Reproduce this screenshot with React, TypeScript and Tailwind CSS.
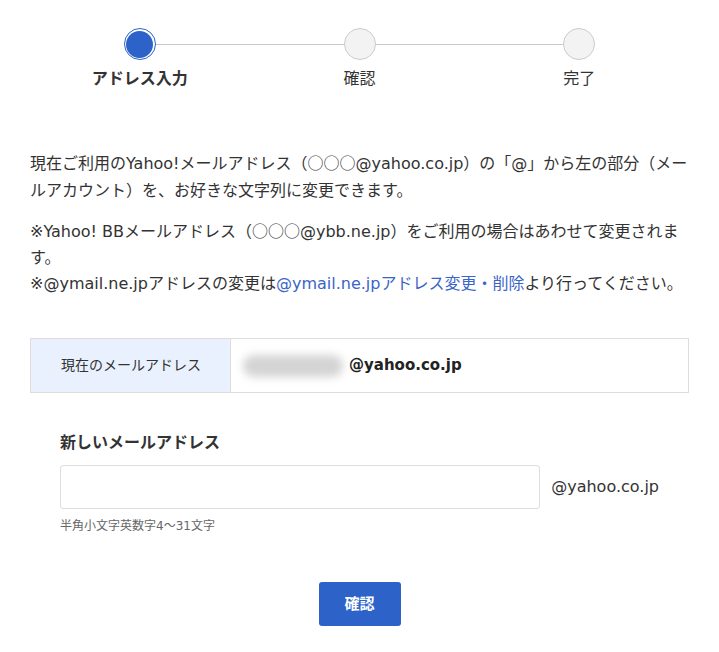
import React from 'react'

const font = { fontFamily: '"DejaVu Sans", "Noto Sans CJK JP", sans-serif' }
const cjk = { fontFamily: '"Noto Sans CJK JP", sans-serif' }

type Step = { label: string; active: boolean }

const steps: Step[] = [
  { label: 'アドレス入力', active: true },
  { label: '確認', active: false },
  { label: '完了', active: false }
]

function Stepper(): React.JSX.Element {
  return (
    <div className="grid grid-cols-3 pt-[28px]">
      {steps.map((step, i) => (
        <div key={step.label} className="flex flex-col items-center">
          <div className="flex w-full items-center">
            <div className={i === 0 ? 'h-px flex-1' : 'h-px flex-1 bg-[#c8c8c8]'} />
            {step.active ? (
              <div className="flex h-[32px] w-[32px] items-center justify-center rounded-full border border-[#2d62c8] bg-white">
                <div className="h-[27px] w-[27px] rounded-full bg-[#2d62c8]" />
              </div>
            ) : (
              <div className="h-[32px] w-[32px] rounded-full border border-[#cccccc] bg-[#f3f3f3]" />
            )}
            <div className={i === steps.length - 1 ? 'h-px flex-1' : 'h-px flex-1 bg-[#c8c8c8]'} />
          </div>
          <div
            className={
              step.active
                ? 'mt-[7px] text-[16px] leading-[24px] font-bold text-[#333]'
                : 'mt-[7px] text-[16px] leading-[24px] text-[#333]'
            }
          >
            {step.label}
          </div>
        </div>
      ))}
    </div>
  )
}

export default function App(): React.JSX.Element {
  return (
    <div className="min-h-[652px] bg-white px-[30px] text-[#333]" style={font}>
      <Stepper />

      <div className="mt-[58px] text-[16px] leading-[27px]">
        <p>
          現在ご利用のYahoo!メールアドレス（<span style={cjk}>○○○</span>@yahoo.co.jp）の「@」から左の部分（メールアカウント）を、お好きな文字列に変更できます。
        </p>
        <p className="mt-[13px] leading-[26px]">
          ※Yahoo! BBメールアドレス（<span style={cjk}>○○○</span>@ybb.ne.jp）をご利用の場合はあわせて変更されます。
          <br />
          ※@ymail.ne.jpアドレスの変更は<a className="text-[#3a64c9]">@ymail.ne.jpアドレス変更・削除</a>より行ってください。
        </p>
      </div>

      <div className="mt-[41px] flex h-[55px] border border-[#dddddd]">
        <div className="flex w-[200px] items-center border-r border-[#dddddd] bg-[#e8f1fd] pl-[30px] text-[14px]">
          現在のメールアドレス
        </div>
        <div className="flex items-center pl-[12px]">
          <div className="h-[22px] w-[100px] rounded-full bg-[#d4d4d4] blur-[4px]" />
          <span className="ml-[6px] text-[15px] font-bold text-[#222]">@yahoo.co.jp</span>
        </div>
      </div>

      <div className="mt-[38px] px-[30px]">
        <div className="text-[16px] leading-[24px] font-bold">新しいメールアドレス</div>
        <div className="mt-[10px] flex items-center">
          <input
            type="text"
            aria-label="新しいメールアドレス"
            className="h-[44px] w-[483px] rounded-[3px] border border-[#dddddd] px-3 text-[16px] outline-none"
          />
          <span className="ml-[11px] text-[16px] text-[#333]">@yahoo.co.jp</span>
        </div>
        <div className="mt-[9px] text-[12px] leading-[16px] text-[#666]">半角小文字英数字4～31文字</div>
      </div>

      <div className="mt-[48px] flex justify-center">
        <button
          type="button"
          className="h-[44px] w-[82px] rounded-[3px] bg-[#2d62c8] text-[15px] font-bold text-white"
        >
          確認
        </button>
      </div>
    </div>
  )
}
